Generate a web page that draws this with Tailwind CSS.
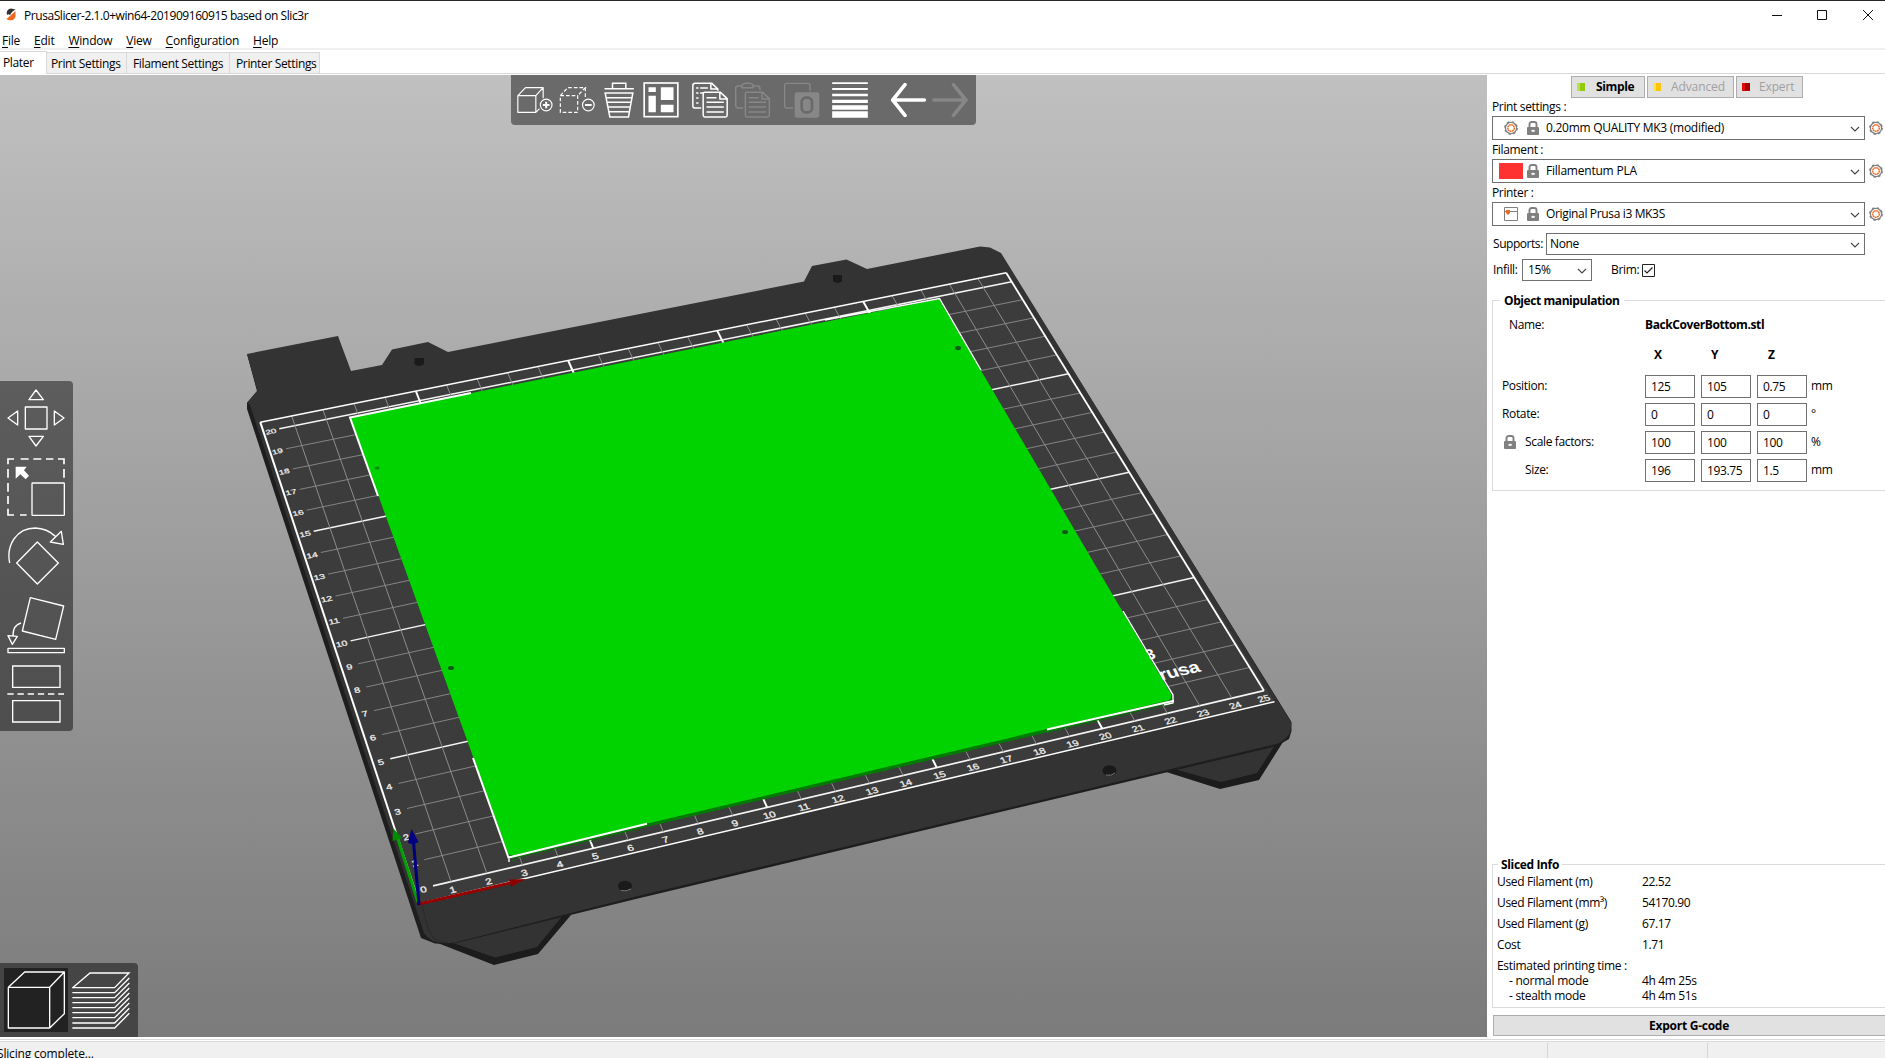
<!DOCTYPE html>
<html lang="en">
<head>
<meta charset="utf-8">
<title>PrusaSlicer</title>
<script src="https://cdn.jsdelivr.net/npm/@tailwindcss/browser@4"></script>
</head>
<body class="w-[1885px] h-[1058px] overflow-hidden bg-white text-black font-['Open_Sans',sans-serif] text-[12px] tracking-[-0.35px] whitespace-nowrap flex flex-col">
<svg class="hidden">
  <defs>
    <symbol id="lock" viewBox="0 0 12 14"><path d="M2.5 7V3.2Q2.5 1 4.7 1H7.3Q9.500 1 9.500 3.200V7" fill="none" stroke="#808080" stroke-width="1.9"/><rect y="6" width="12" height="8" rx="1" fill="#808080"/><path d="M4.300 9.800H8M6 8.800V11" stroke="#fff" stroke-width="1.300"/></symbol>
    <symbol id="gear" viewBox="0 0 14 14"><circle cx="7" cy="7" r="5.600" fill="none" stroke="#808080" stroke-width="1.300"/><circle cx="7" cy="7" r="6.200" fill="none" stroke="#808080" stroke-width="1.400" stroke-dasharray="2.400 2.470"/><circle cx="7" cy="7" r="3.300" fill="none" stroke="#ed6b21" stroke-width="1.500" stroke-dasharray="1.800 .4"/></symbol>
    <symbol id="chev" viewBox="0 0 10 6"><path d="M1 1L5 5L9 1" fill="none" stroke="#444" stroke-width="1.100"/></symbol>
  </defs>
</svg>

<!-- title bar -->
<div class="h-[28px] shrink-0 border-t border-[#2b2729] flex items-center pl-[6px]">
  <svg class="w-[10px] h-[13px]" viewBox="0 0 10 13"><path d="M1 7V4Q1 1 5 .5L9.500 1.500Z" fill="#333"/><path d="M0 5L8 1L4 7Z" fill="#333"/><path d="M9.500 3V8Q9 12 5 12.300Q2 12.500 .5 11Z" fill="#ed6b21"/></svg>
  <span class="ml-2 mt-[2px] tracking-[-0.44px]">PrusaSlicer-2.1.0+win64-201909160915 based on Slic3r</span>
  <svg class="ml-auto mr-[11px] w-[104px] h-[12px]" viewBox="0 0 104 12" fill="none" stroke="#111" stroke-width="1"><path d="M2 6.500H12M47.500 1.500H56.500V10.500H47.500ZM93 1L103 11M103 1L93 11"/></svg>
</div>
<!-- menu -->
<div class="h-[22px] shrink-0 flex items-center pl-[2px] pt-[5px] gap-[14px] tracking-[-0.24px] leading-[16px] border-b-2 border-[#f0f0f0] [&_u]:underline-offset-2">
  <span><u>F</u>ile</span><span><u>E</u>dit</span><span><u>W</u>indow</span><span><u>V</u>iew</span><span><u>C</u>onfiguration</span><span><u>H</u>elp</span>
</div>
<!-- tabs -->
<div class="h-[25px] shrink-0 relative flex items-end pb-[1px]">
  <div class="absolute inset-x-0 top-[23px] h-px bg-[#d9d9d9]"></div>
  <div class="relative w-[47px] h-[23px] border-t border-r border-[#d9d9d9] bg-white pl-[3px] leading-[21px]">Plater</div>
  <div class="relative w-[80px] h-[21px] mb-[1px] border-t border-r border-[#d9d9d9] bg-[#f0f0f0] pl-1 leading-[21px]">Print Settings</div>
  <div class="relative w-[103px] h-[21px] mb-[1px] border-t border-r border-[#d9d9d9] bg-[#f0f0f0] pl-[6px] leading-[21px]">Filament Settings</div>
  <div class="relative w-[90px] h-[21px] mb-[1px] border-t border-r border-[#d9d9d9] bg-[#f0f0f0] pl-[6px] leading-[21px]">Printer Settings</div>
</div>

<div class="h-[962px] shrink-0 flex">
  <!-- 3D view -->
  <main class="relative w-[1487px] h-[962px] overflow-hidden bg-linear-to-b from-[#c0c0c0] to-[#7b7b7b]">
    <svg class="absolute inset-0 w-[1487px] h-[962px]" viewBox="0 75 1487 962">
      <g fill="#1c1c1c"><path d="M430 940L494 965L538 954L571 915L500 920ZM1160 770L1220 789L1259 780L1283 742Z"/></g>
      <g fill="#333"><path d="M450 942L495 957.500L537 947L563 915ZM1170 768L1221 782L1257 773L1277 742Z"/></g>
      <path d="M247 354L257 391L247 402.700V409L421 938L435 943.500L452 944L640 898L1277 746L1289 739L1291.500 731V722L1001 254L800 400L351 430Z" fill="#1e1e1e"/>
      <path d="M247 354L338 336L351 371L382 365L392 349.500L428 342L448 352L804 281.500L812 266L846.500 259.500L867 269L980 246.500L990 247.500L1001 253L1291 722V728Q1290 738 1278 743.500L640 895.500L455 942.500Q432 946 424 933L250 405L247 402.700L257.500 391Z" fill="#333"/>
      <path d="M422 905L428 929Q434 943 447 942.500" fill="none" stroke="#292929"/>
      <g id="bed"></g>
      <g fill="#1a1a1a"><path d="M414.500 358H424V364Q419 368 414.500 364ZM833 275H842V281Q837.500 285 833 281Z"/><ellipse cx="625" cy="886" rx="7" ry="5.300"/><ellipse cx="1109.500" cy="770.500" rx="7" ry="5.300"/></g>
      <path d="M621 890.500Q626 892 631 889M1106 775Q1111 776.500 1115 773" stroke="#777" fill="none"/>
      <g fill="#fff" font-family="Liberation Sans" font-weight="bold"><text font-size="17" transform="matrix(.98 -.23 .38 .8 1147.500 660)">3</text><text font-size="19" transform="matrix(1.03 -.24 .38 .8 1161.500 680.500)">rusa</text></g>
      <path d="M508.500 856L511 859L1172 703L1172.500 697L508 853Z" fill="#007a00"/>
      <path d="M350 417.500L939 299L1171 694Q1172 698 1169 700.200L514 855Q509 855.500 508 853Z" fill="#00d300"/>
      <g fill="none" stroke="#fff" stroke-width="2"><path d="M378 496L350 417.500L471 393M473 758L508.500 857.500L647 823.700M1047 729.500L1174 700.700"/><path stroke-width="1.400" d="M825 320L939.500 298.500L981 370M1123 611L1173 695V703L1164 705M509 858.500V862"/></g>
      <path d="M512 860.500L640 830M1050 733L1174 704" stroke="#007a00" stroke-dasharray="1 2"/>
      <g fill="#11591a"><ellipse cx="377" cy="468" rx="2.500" ry="1.500" opacity=".6"/><ellipse cx="958" cy="348" rx="3" ry="2"/><ellipse cx="451" cy="668" rx="3" ry="2"/><ellipse cx="1065" cy="532" rx="3" ry="2"/></g>
      <g><path d="M418 902L397.500 838" stroke="#00a000" stroke-width="3"/><path d="M393.500 828.500L402 838L392.500 841Z" fill="#008c00"/>
      <path d="M419 904L512 882.500" stroke="#960000" stroke-width="3"/><path d="M526 879L509 879.500L511.500 886.500Z" fill="#8c0000"/>
      <path d="M419 905L413.500 842" stroke="#00007d" stroke-width="3"/><path d="M411.500 829L418.500 842Q413 846 408 842.500Z" fill="#000082"/></g>
    </svg>

    <!-- top toolbar -->
    <div class="absolute left-[510.500px] top-0 w-[465px] h-[50px] rounded-b-[4px] bg-[#6a6a6a] pl-[6.500px] pt-[7px] flex items-start [&>svg]:w-[36px] [&>svg]:h-[36px] [&>svg]:shrink-0">
      <svg viewBox="52.500 36 108 108" fill="none" stroke="#fff" stroke-width="3.500"><path d="M55 77H109V127H55ZM55 77L78 53H131L109 77M131 53V85M109 127L120 116" stroke-linejoin="round"/><circle cx="140" cy="105" r="17.500"/><path d="M130 105H150M140 95V115" stroke-width="6"/></svg>
      <svg class="ml-[5.500px]" viewBox="177 36 108 108" fill="none" stroke="#fff" stroke-width="3.500"><path d="M181 77H233V127H181ZM181 77L203 53H256L233 77M256 53V85" stroke-dasharray="11 6"/><circle cx="265" cy="105" r="17.500"/><path d="M255 105H275" stroke-width="6"/></svg>
      <svg class="ml-[6.500px]" viewBox="304.500 36 108 108" fill="none" stroke="#fff" stroke-width="4.500"><path d="M315 56H403M339 54V40H379V54M317 69H400L387 141H331ZM320 83H397M322 97H395M325 111H393M328 125H390"/></svg>
      <svg class="ml-[6px]" viewBox="430.500 36 108 108"><rect x="434" y="39" width="101" height="101" fill="none" stroke="#fff" stroke-width="5"/><path d="M447 52H469V66H447ZM447 77H469V127H447ZM484 52H522V90H484ZM484 104H522V127H484Z" fill="#fff"/></svg>
      <svg class="ml-[13px]" viewBox="577.500 36 108 108" fill="none" stroke="#fff" stroke-width="4.500" stroke-linejoin="round"><path d="M605 114H587Q580 114 580 107V47Q580 40 587 40H637L655 57V62M634 40V57H655M590 54H597M602 54H625M590 69H597M602 69H612M590 84H597M590 99H597"/><path d="M611 72Q611 67 616 67H663L683 86V136Q683 141 678 141H616Q611 141 611 136ZM661 67V87H683M621 83H651M621 97H673M621 111H673M621 126H673"/></svg>
      <svg class="ml-[6.500px]" viewBox="705 36 108 108" fill="none" stroke="#878787" stroke-width="4.500" stroke-linejoin="round"><path d="M729 114H714Q707 114 707 107V54Q707 48 714 48H726M726 53V44L735 40H750L759 44V53ZM759 48H773Q780 48 780 57V61"/><path d="M736 72Q736 67 741 67H788L808 86V136Q808 141 803 141H741Q736 141 736 136ZM786 67V87H808M746 83H776M746 97H798M746 111H798M746 126H798"/></svg>
      <svg class="ml-[13px]" viewBox="852 36 108 108"><path d="M879 114H860Q854 114 854 107V46Q854 40 861 40H923Q930 40 930 46V64" fill="none" stroke="#878787" stroke-width="4"/><rect x="884" y="67" width="74" height="76" rx="7" fill="#878787"/><rect x="905" y="83" width="31" height="44" rx="13" fill="none" stroke="#6a6a6a" stroke-width="8"/></svg>
      <svg class="ml-[12.500px]" viewBox="997.500 36 108 108" fill="#fff"><path d="M998 37H1105V42H998ZM998 54H1105V60H998ZM998 71H1105V79H998ZM998 89H1105V99H998ZM998 106H1105V119H998ZM998 124H1105V143H998Z"/></svg>
      <svg class="ml-[22.500px]" viewBox="1173 36 108 108" fill="none" stroke="#fff" stroke-width="11" stroke-linecap="round"><path d="M1178 90H1273M1215 44L1178 90L1215 136"/></svg>
      <svg class="ml-[5.500px]" viewBox="1297.500 36 108 108" fill="none" stroke="#878787" stroke-width="11" stroke-linecap="round"><path d="M1303 90H1399M1362 44L1399 90L1362 136"/></svg>
    </div>

    <!-- gizmos -->
    <div class="absolute left-0 top-[306px] w-[73px] h-[350px] rounded-r-[4px] bg-linear-to-b from-[#5d5d5d] to-[#4e4e4e] pl-[7px] pt-[8px] flex flex-col gap-[11px] [&>svg]:w-[58px] [&>svg]:h-[58px]">
      <svg viewBox="21 57 174 174" fill="none" stroke="#fff" stroke-width="4" stroke-linejoin="round"><path d="M76 111H141V177H76ZM108 60L130 89H87ZM108 228L130 199H87ZM24 144L53 123V165ZM192 144L163 123V165Z"/></svg>
      <svg viewBox="21 264 174 174" fill="none" stroke="#fff" stroke-width="5"><path d="M24 283V267H42M62 267H86M100 267H124M138 267H160M174 267H192V283M192 297V323M24 297V323M24 339V365M24 378V402M24 416V435H42M60 435H80"/><rect x="96" y="339" width="97" height="97" rx="2" stroke-width="4"/><path d="M47 290H80L72 301L87 317L77 328L61 313L47 326Z" fill="#fff" stroke="none"/></svg>
      <svg viewBox="21 471 174 174" fill="none" stroke="#fff" stroke-width="4" stroke-linejoin="round"><path d="M112 516L175 579L112 642L50 579ZM29 579C18 525 50 474 106 474Q141 475 166 499M184 484L190 523L151 516Z"/></svg>
      <svg viewBox="21 678 174 174" fill="none" stroke="#fff" stroke-width="4" stroke-linejoin="round"><path d="M91 683L191 708L167 808L67 783ZM63 759Q39 765 39 797M24 797L52 799L37 823ZM24 835H193V848H24Z"/></svg>
      <svg viewBox="21 885 174 174" fill="none" stroke="#fff" stroke-width="4"><path d="M38 888H180V952H38ZM38 992H180V1056H38Z"/><path d="M22 972H192" stroke-width="5" stroke-dasharray="19 11.500"/></svg>
    </div>

    <!-- view switch -->
    <div class="absolute left-0 bottom-0 w-[138px] h-[74px] rounded-tr-[4px] bg-[#454545] pl-1 pt-[5px] flex gap-[4px]">
      <svg class="w-[64px] h-[64px] bg-[#222]" viewBox="12 54 192 192" fill="none" stroke="#fff" stroke-width="4" stroke-linejoin="round"><path d="M25 112H149V234H25ZM25 112L74 66H193L149 112M193 66V191L149 234"/></svg>
      <svg class="w-[60px] h-[64px]" viewBox="216 54 180 192" fill="none" stroke="#fff" stroke-width="4"><path d="M218 113L270 69H387L344 113ZM217 128H344L388 84M217 143H344L388 99M217 158H344L388 114M217 173H344L388 129M217 188H344L388 144M217 203H344L388 159M217 219H344L388 175M217 234H344L388 190"/></svg>
    </div>
  </main>

  <!-- side panel -->
  <aside class="w-[398px] h-[962px] overflow-hidden pl-[5px] flex flex-col">
    <div class="mt-[1px] h-[22px] shrink-0 ml-[79px] flex gap-[2px] leading-[20px] [&>div]:border [&>div]:border-[#adadad] [&>div]:bg-[#e1e1e1] [&>div]:flex [&>div]:items-center text-[#a0a0a0]">
      <div class="w-[74px] pl-[5px] text-black font-bold"><i class="w-[8px] h-[8px] mr-[11px] bg-linear-to-r from-[#b7e04e] from-40% to-[#93c90e] to-40%"></i>Simple</div>
      <div class="w-[87px] pl-[5px] tracking-[-0.1px]"><i class="w-[8px] h-[8px] mr-[10px] bg-linear-to-r from-[#ffe05a] from-40% to-[#fcc50b] to-40%"></i>Advanced</div>
      <div class="w-[67px] pl-[5px] tracking-[-0.15px]"><i class="w-[8px] h-[8px] mr-[9px] bg-linear-to-r from-[#e00b0b] from-40% to-[#a80000] to-40%"></i>Expert</div>
    </div>
    <div class="h-[18px] shrink-0 leading-[18px]">Print settings :</div>
    <div class="h-[24px] shrink-0 flex items-center">
      <div class="w-[373px] h-[24px] border border-[#707070] flex items-center pl-[11px] pr-1"><svg class="w-[14px] h-[14px]"><use href="#gear"/></svg><svg class="ml-[9px] w-[12px] h-[14px]"><use href="#lock"/></svg><span class="ml-[7px] tracking-[-0.27px]">0.20mm QUALITY MK3 (modified)</span><svg class="ml-auto w-[10px] h-[6px] translate-y-px"><use href="#chev"/></svg></div>
      <svg class="ml-[4px] w-[14px] h-[14px]"><use href="#gear"/></svg>
    </div>
    <div class="h-[19px] shrink-0 leading-[20px]">Filament :</div>
    <div class="h-[24px] shrink-0 flex items-center">
      <div class="w-[373px] h-[24px] border border-[#707070] flex items-center pl-[6px] pr-1"><i class="w-[24px] h-[16px] bg-[#ff3232]"></i><svg class="ml-[4px] w-[12px] h-[14px]"><use href="#lock"/></svg><span class="ml-[7px] tracking-[-0.22px]">Fillamentum PLA</span><svg class="ml-auto w-[10px] h-[6px] translate-y-px"><use href="#chev"/></svg></div>
      <svg class="ml-[4px] w-[14px] h-[14px]"><use href="#gear"/></svg>
    </div>
    <div class="h-[19px] shrink-0 leading-[20px]">Printer :</div>
    <div class="h-[24px] shrink-0 flex items-center">
      <div class="w-[373px] h-[24px] border border-[#707070] flex items-center pl-[11px] pr-1"><svg class="w-[14px] h-[14px]" viewBox="0 0 14 14"><path d="M.5 .5H13.500V13.500H.5ZM.5 4.500H13.500" fill="none" stroke="#808080"/><path d="M2 3H6V6L4 8L2 6Z" fill="#ed6b21"/></svg><svg class="ml-[9px] w-[12px] h-[14px]"><use href="#lock"/></svg><span class="ml-[7px]">Original Prusa i3 MK3S</span><svg class="ml-auto w-[10px] h-[6px] translate-y-px"><use href="#chev"/></svg></div>
      <svg class="ml-[4px] w-[14px] h-[14px]"><use href="#gear"/></svg>
    </div>
    <div class="mt-[7px] h-[22px] shrink-0 flex items-center">
      <span class="w-[54px] pl-px tracking-[-0.45px]">Supports:</span>
      <div class="w-[319px] h-[22px] border border-[#707070] flex items-center pl-[3px] pr-1">None<svg class="ml-auto w-[10px] h-[6px] translate-y-px"><use href="#chev"/></svg></div>
    </div>
    <div class="mt-[4px] h-[22px] shrink-0 flex items-center">
      <span class="w-[30px] pl-px">Infill:</span>
      <div class="w-[70px] h-[22px] border border-[#707070] flex items-center pl-[5px] pr-1">15%<svg class="ml-auto w-[10px] h-[6px] translate-y-px"><use href="#chev"/></svg></div>
      <span class="ml-[19px] w-[31px]">Brim:</span>
      <svg class="w-[13px] h-[13px]" viewBox="0 0 13 13" fill="none" stroke="#222"><path d="M.5 .5H12.500V12.500H.5Z"/><path d="M2.500 6.500L5 9L10.500 3.500" stroke-width="1.200"/></svg>
    </div>

    <!-- object manipulation -->
    <section class="relative mt-[19px] h-[191px] shrink-0 border border-r-0 border-[#dcdcdc]">
      <b class="absolute left-[7px] -top-[9px] px-[4px] bg-white leading-[18px] tracking-[-0.42px]">Object manipulation</b>
      <div class="mt-[15px] h-[18px] leading-[18px] flex"><span class="w-[152px] pl-[16px]">Name:</span><b class="tracking-[-0.4px]">BackCoverBottom.stl</b></div>
      <div class="mt-[12px] h-[18px] leading-[18px] flex font-bold"><span class="ml-[161px] w-[57px]">X</span><span class="w-[57px]">Y</span><span>Z</span></div>
      <div class="mt-[11px] grid grid-cols-[152px_50px_50px_50px_auto] gap-y-[5px] leading-[21px] [&>i]:not-italic [&>i]:h-[23px] [&>i]:border [&>i]:border-[#707070] [&>i]:pl-[5px]">
        <span class="pl-[9px]">Position:</span><i>125</i><i class="translate-x-[6px]">105</i><i class="translate-x-[12px]">0.75</i><span class="pl-[16px]">mm</span>
        <span class="pl-[9px]">Rotate:</span><i>0</i><i class="translate-x-[6px]">0</i><i class="translate-x-[12px]">0</i><span class="pl-[16px]">°</span>
        <span class="pl-[11px] pb-[2px] flex items-center"><svg class="w-[12px] h-[14px] mr-[9px]"><use href="#lock"/></svg>Scale factors:</span><i>100</i><i class="translate-x-[6px]">100</i><i class="translate-x-[12px]">100</i><span class="pl-[16px]">%</span>
        <span class="pl-[32px]">Size:</span><i>196</i><i class="translate-x-[6px]">193.75</i><i class="translate-x-[12px]">1.5</i><span class="pl-[16px]">mm</span>
      </div>
    </section>

    <!-- sliced info -->
    <section class="relative mt-auto h-[144px] shrink-0 border border-r-0 border-[#dcdcdc]">
      <b class="absolute left-[5px] -top-[9px] px-[3px] bg-white leading-[18px]">Sliced Info</b>
      <div class="mt-[6px] ml-[4px] grid grid-cols-[145px_auto] auto-rows-[21px] leading-[21px]">
        <span>Used Filament (m)</span><span>22.52</span>
        <span>Used Filament (mm³)</span><span>54170.90</span>
        <span>Used Filament (g)</span><span>67.17</span>
        <span>Cost</span><span>1.71</span>
      </div>
      <div class="mt-[3px] ml-[4px] grid grid-cols-[145px_auto] auto-rows-[15px] leading-[15px]">
        <span class="col-span-2 tracking-[-0.3px]">Estimated printing time :</span>
        <span class="pl-[12px] tracking-[-0.25px]">- normal mode</span><span>4h 4m 25s</span>
        <span class="pl-[12px] tracking-[-0.3px]">- stealth mode</span><span>4h 4m 51s</span>
      </div>
    </section>
    <div class="ml-px mt-[7px] mb-[1px] h-[21px] shrink-0 border border-r-0 border-[#adadad] bg-[#e1e1e1] leading-[19px] font-bold pl-[155px] tracking-[-0.25px]">Export G-code</div>
  </aside>
</div>

<!-- status bar -->
<div class="h-[21px] shrink-0 flex flex-col">
  <div class="mt-[2px] h-[3px] shrink-0 border-y border-[#d9d9d9]"></div>
  <div class="h-[16px] bg-[#f0f0f0] flex overflow-hidden">
    <span class="w-[1547px] shrink-0 -ml-[3px] pt-[3px] leading-[18px] tracking-[-0.18px]">Slicing complete...</span>
    <span class="mt-[1px] ml-[3px] w-[161px] border-x border-[#d5d5d5]"></span>
  </div>
</div>

<script>
// Projects bed coordinates (cm) onto the view with a four-point homography.
const src = [[1, 0], [1, 20], [25, 20], [25, 0]];
const dst = [[451, 881.7], [295, 425.7], [1011.7, 281.7], [1264, 690.7]];
const A = [];
src.forEach(([x, y], i) => {
  const [u, v] = dst[i];
  A.push([x, y, 1, 0, 0, 0, -u * x, -u * y, u], [0, 0, 0, x, y, 1, -v * x, -v * y, v]);
});
for (let c = 0; c < 8; c++) {
  let p = c;
  for (let r = c; r < 8; r++) if (Math.abs(A[r][c]) > Math.abs(A[p][c])) p = r;
  [A[c], A[p]] = [A[p], A[c]];
  for (let r = 0; r < 8; r++) if (r !== c) {
    const f = A[r][c] / A[c][c];
    for (let k = c; k < 9; k++) A[r][k] -= f * A[c][k];
  }
}
const h = A.map((r, i) => r[8] / r[i]);
const P = (x, y) => {
  const w = h[6] * x + h[7] * y + 1;
  return [(h[0] * x + h[1] * y + h[2]) / w, (h[3] * x + h[4] * y + h[5]) / w];
};
const line = (x1, y1, x2, y2, s, w) => {
  const a = P(x1, y1), b = P(x2, y2);
  return `<path d="M${a}L${b}" stroke="${s}" stroke-width="${w}" fill="none"/>`;
};
const label = (t, x, y, size) => {
  const o = P(x, y), a = P(x + .1, y), b = P(x, y + .1);
  const m = [(a[0] - o[0]) / 10, (a[1] - o[1]) / 10, (o[0] - b[0]) / 10, (o[1] - b[1]) / 10];
  return `<text transform="matrix(${m} ${o})" font-size="${size}" text-anchor="middle" y="${size * .36}" fill="#eee" stroke="#eee" stroke-width="1" font-family="Liberation Sans">${t}</text>`;
};
let out = `<path d="M${P(0, -.5)}L${P(25.1, -.5)}L${P(25, 20.5)}L${P(0, 20.5)}Z" fill="#3c3c3c"/>`;
for (let y = 0; y <= 20; y++) {
  const big = y % 5 === 0;
  out += line(.5, y, 25, y, big ? '#f4f4f4' : '#8c8c8c', y === 0 ? 1.7 : big ? 1.5 : .9);
  out += label(y, .22, y - .04, 31);
}
for (let x = 1; x < 25; x++) {
  const big = x % 5 === 0, s = big ? '#fff' : '#8c8c8c', w = big ? 2 : 1;
  if (x === 22) out += line(x, 0, x, .9, s, w) + line(x, 1.9, x, 2.1, s, w) + line(x, 3, x, 20.5, s, w);
  else out += line(x, 0, x, 20.5, s, w);
}
for (let x = 1; x <= 25; x++) out += label(x, x - (x > 24 ? .14 : .03), -.29, 32);
out += line(0, -.5, 0, 20.5, '#fff', 2) + line(25, 0, 25, 20.5, '#fff', 1.800) + line(0, 20.5, 25, 20.5, '#fff', 1.500) + line(0, -.5, 25.1, -.5, '#fff', 1.500);
document.getElementById('bed').innerHTML = out;
</script>
</body>
</html>
